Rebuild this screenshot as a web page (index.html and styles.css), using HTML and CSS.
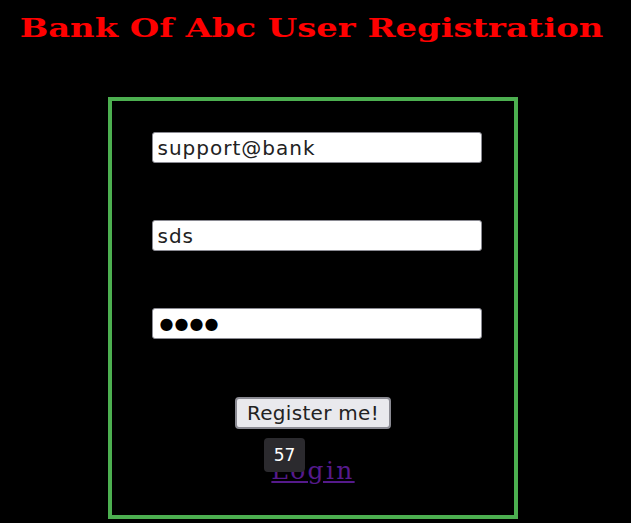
FILE: index.html
```html
<!DOCTYPE html>
<html>
<head>
<meta charset="utf-8">
<link rel="stylesheet" href="styles.css">
</head>
<body>
<header class="head">
  <h1 class="title">Bank Of Abc User Registration</h1>
</header>
<div class="panel">
  <form class="form">
    <input class="field" type="text" value="support@bank">
    <input class="field" type="text" value="sds">
    <input class="field secret" type="text" value="●●●●" aria-label="password">
    <button class="btn" type="button">Register me!</button>
    <a class="link" href="#">Login</a>
    <span class="badge">57</span>
  </form>
</div>
</body>
</html>
```
FILE: styles.css
```css
html, body {
  margin: 0;
  padding: 0;
  background: #000;
}
body {
  width: 631px;
  height: 523px;
  overflow: hidden;
}
.head {
  display: flex;
  justify-content: center;
  padding-top: 12px;
  padding-right: 7px;
  height: 32px;
}
.title {
  margin: 0;
  display: inline-block;
  color: #ff0000;
  font-family: "DejaVu Serif", serif;
  font-weight: bold;
  font-size: 26px;
  line-height: 32px;
  white-space: nowrap;
  transform: scaleX(1.3);
}
.panel {
  width: 402px;
  height: 414px;
  margin: 53px 0 0 108px;
  border: 4px solid #4caf50;
}
.form {
  position: relative;
  display: flex;
  flex-direction: column;
  align-items: center;
  padding-top: 31px;
}
.field {
  box-sizing: border-box;
  width: 330px;
  height: 31px;
  margin: 0 0 57px 7px;
  padding: 0 5px;
  border: 1px solid #8a8a92;
  border-radius: 3px;
  background: #fff;
  color: #222;
  font-family: "DejaVu Sans", sans-serif;
  font-size: 20px;
  letter-spacing: 1px;
}
.secret {
  color: #000;
  font-size: 16px;
  letter-spacing: 1px;
  padding-left: 7px;
}
.btn {
  box-sizing: border-box;
  margin-top: 1px;
  height: 32px;
  padding: 0 10px;
  border: 2px solid #8a8a92;
  border-radius: 4px;
  background: #e9e9ed;
  color: #222;
  font-family: "DejaVu Sans", sans-serif;
  font-size: 20px;
  letter-spacing: 0.3px;
}
.link {
  margin-top: 27px;
  color: #551a8b;
  font-family: "DejaVu Serif", serif;
  font-size: 25px;
  letter-spacing: 2.3px;
  line-height: 30px;
}
.badge {
  position: absolute;
  left: 152px;
  top: 337px;
  width: 41px;
  height: 34px;
  border-radius: 4px;
  background: #2b2a2e;
  color: #fff;
  font-family: "DejaVu Sans", sans-serif;
  font-size: 17px;
  line-height: 34px;
  text-align: center;
}
```
